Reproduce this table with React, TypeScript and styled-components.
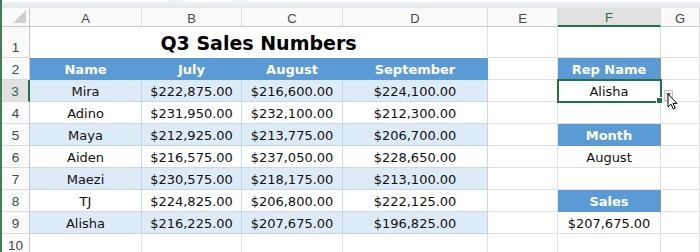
import React from "react";
import styled, { createGlobalStyle, css } from "styled-components";

const GlobalStyle = createGlobalStyle`
  html, body {
    margin: 0;
    padding: 0;
    background: #fff;
    overflow: hidden;
  }
  body {
    font-family: "DejaVu Sans", "Liberation Sans", sans-serif;
  }
`;

const Sheet = styled.div`
  width: 700px;
  height: 252px;
  overflow: hidden;
  box-sizing: border-box;
  border-left: 2px solid #3f7f56;
`;

const TopStrip = styled.div`
  height: 8px;
  display: flex;
  gap: 16px;
  align-items: flex-start;
  background: linear-gradient(#f1f3f5, #e4e8ec);
`;

const StripBox = styled.div<{ $w: string }>`
  width: ${(p) => p.$w};
  height: 2px;
  background: #fff;
`;

const Grid = styled.div`
  display: grid;
  grid-template-columns: 28px 112px 100px 101px 145px 70px 103px 1fr;
  grid-template-rows: 19px 31px repeat(9, 22px);
`;

const Corner = styled.div`
  box-sizing: border-box;
  background: #fafafa;
  border-right: 1px solid #c8c8c8;
  border-bottom: 1px solid #c8c8c8;
  display: flex;
  justify-content: flex-end;
  align-items: flex-end;
  padding: 0 3px 3px 0;
`;

const SelectAll = styled.div`
  width: 13px;
  height: 13px;
  background: #d0d0d0;
  clip-path: polygon(100% 0, 100% 100%, 0 100%);
`;

const ColHead = styled.div<{ $active?: boolean }>`
  box-sizing: border-box;
  background: #fafafa;
  color: #474747;
  font-family: "Liberation Sans", sans-serif;
  font-size: 13px;
  line-height: 15px;
  display: flex;
  justify-content: center;
  align-items: flex-end;
  border-right: 1px solid #dadada;
  border-bottom: 1px solid #c8c8c8;
  ${(p) =>
    p.$active &&
    css`
      background: #e1e1e1;
      color: #1f6e43;
      border-bottom: 2px solid #217346;
    `}
`;

const RowHead = styled.div<{ $active?: boolean }>`
  box-sizing: border-box;
  background: #fafafa;
  color: #474747;
  font-family: "Liberation Sans", sans-serif;
  font-size: 13.5px;
  line-height: 16px;
  display: flex;
  justify-content: center;
  align-items: flex-end;
  padding-bottom: 1px;
  border-right: 1px solid #c8c8c8;
  border-bottom: 1px solid #dadada;
  ${(p) =>
    p.$active &&
    css`
      background: #e1e1e1;
      color: #1f6e43;
      border-right: 2px solid #217346;
    `}
`;

type Tone = "grid" | "row" | "band" | "head";

const toneStyles: Record<Tone, ReturnType<typeof css>> = {
  grid: css`
    background: #fff;
    border-color: #e1e1e1;
  `,
  row: css`
    background: #fff;
    border-color: #c9d9ec;
  `,
  band: css`
    background: #ddebf7;
    border-color: #c4d6eb;
  `,
  head: css`
    background: #5b9bd5;
    border-color: #5b9bd5;
    color: #fff;
    font-weight: bold;
  `,
};

const Cell = styled.div<{ $tone: Tone; $edge?: boolean; $selected?: boolean }>`
  box-sizing: border-box;
  position: relative;
  display: flex;
  justify-content: center;
  align-items: flex-end;
  padding-bottom: 1px;
  font-size: 13px;
  line-height: 16px;
  color: #111;
  white-space: nowrap;
  border-right: 1px solid;
  border-bottom: 1px solid;
  ${(p) => toneStyles[p.$tone]}
  ${(p) =>
    p.$edge &&
    css`
      border-right-color: #8f969d;
    `}
  ${(p) =>
    p.$selected &&
    css`
      z-index: 2;
      outline: 2px solid #217346;
      outline-offset: -1px;
    `}
`;

const Title = styled.div`
  grid-column: span 4;
  box-sizing: border-box;
  display: flex;
  justify-content: center;
  align-items: flex-end;
  padding-bottom: 3px;
  font-size: 19px;
  line-height: 23px;
  font-weight: bold;
  color: #000;
  border-right: 1px solid #e1e1e1;
`;

const FillHandle = styled.span`
  position: absolute;
  right: -3px;
  bottom: -3px;
  width: 5px;
  height: 5px;
  background: #217346;
  border: 1px solid #fff;
`;

const DropButton = styled.span`
  position: absolute;
  left: 106px;
  top: 10px;
  width: 9px;
  height: 11px;
  box-sizing: border-box;
  background: #f2f2f2;
  border: 1px solid #c4c4c4;
  display: flex;
  justify-content: center;
  padding-top: 2px;
`;

const DropArrow = styled.span`
  width: 5px;
  height: 3px;
  background: #666;
  clip-path: polygon(0 0, 100% 0, 50% 100%);
`;

const Pointer = styled.svg`
  position: absolute;
  left: 109px;
  top: 13px;
  z-index: 3;
`;

const months = ["Name", "July", "August", "September"];

const data = [
  ["Mira", "$222,875.00", "$216,600.00", "$224,100.00"],
  ["Adino", "$231,950.00", "$232,100.00", "$212,300.00"],
  ["Maya", "$212,925.00", "$213,775.00", "$206,700.00"],
  ["Aiden", "$216,575.00", "$237,050.00", "$228,650.00"],
  ["Maezi", "$230,575.00", "$218,175.00", "$213,100.00"],
  ["TJ", "$224,825.00", "$206,800.00", "$222,125.00"],
  ["Alisha", "$216,225.00", "$207,675.00", "$196,825.00"],
];

const side: Record<number, { text: string; head?: boolean; selected?: boolean }> = {
  2: { text: "Rep Name", head: true },
  3: { text: "Alisha", selected: true },
  5: { text: "Month", head: true },
  6: { text: "August" },
  8: { text: "Sales", head: true },
  9: { text: "$207,675.00" },
};

const letters = ["A", "B", "C", "D", "E", "F", "G"];

const SideCell = ({ row }: { row: number }) => {
  const s = side[row];
  if (!s) return <Cell $tone="grid" />;
  if (s.head)
    return (
      <Cell $tone="head" $edge>
        {s.text}
      </Cell>
    );
  return (
    <Cell $tone="grid" $selected={s.selected}>
      {s.text}
      {s.selected && (
        <>
          <FillHandle />
          <DropButton>
            <DropArrow />
          </DropButton>
          <Pointer width="11" height="17" viewBox="0 0 11 17">
            <path
              d="M1 1 L1 14 L4 11.2 L6.3 16 L8.3 15.1 L6 10.4 L10 10.4 Z"
              fill="#fff"
              stroke="#000"
              strokeWidth="1"
              strokeLinejoin="round"
            />
          </Pointer>
        </>
      )}
    </Cell>
  );
};

export default function App() {
  const rows: React.ReactNode[] = [];
  for (let r = 1; r <= 10; r++) {
    rows.push(
      <RowHead key={`h${r}`} $active={r === 3}>
        {r}
      </RowHead>
    );
    if (r === 1) {
      rows.push(<Title key="title">Q3 Sales Numbers</Title>);
    } else if (r === 2) {
      months.forEach((m) =>
        rows.push(
          <Cell key={m} $tone="head">
            {m}
          </Cell>
        )
      );
    } else if (r <= 9) {
      const tone: Tone = r % 2 === 1 ? "band" : "row";
      data[r - 3].forEach((v, i) =>
        rows.push(
          <Cell key={`${r}-${i}`} $tone={tone}>
            {v}
          </Cell>
        )
      );
    } else {
      for (let i = 0; i < 4; i++) rows.push(<Cell key={`${r}-${i}`} $tone="grid" />);
    }
    rows.push(<Cell key={`e${r}`} $tone="grid" />);
    rows.push(<SideCell key={`f${r}`} row={r} />);
    rows.push(<Cell key={`g${r}`} $tone="grid" />);
  }

  return (
    <>
      <GlobalStyle />
      <Sheet>
        <TopStrip>
          <StripBox $w="170px" />
          <StripBox $w="48px" />
          <StripBox $w="460px" />
        </TopStrip>
        <Grid>
          <Corner>
            <SelectAll />
          </Corner>
          {letters.map((l) => (
            <ColHead key={l} $active={l === "F"}>
              {l}
            </ColHead>
          ))}
          {rows}
        </Grid>
      </Sheet>
    </>
  );
}
